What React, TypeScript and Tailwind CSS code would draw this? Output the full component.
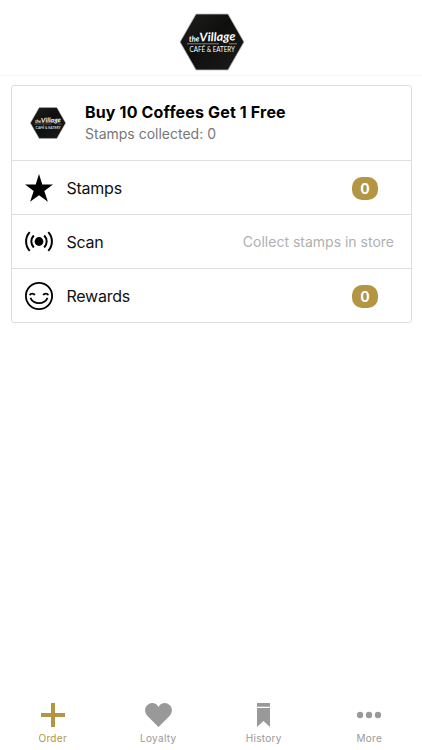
import type { ReactNode } from "react";

function Logo({ className }: { className: string }) {
  return (
    <svg className={className} viewBox="0 0 66 58">
      <defs>
        <linearGradient id="hex" x1="0" y1="0" x2="1" y2="1">
          <stop offset="0" stopColor="#20211f" />
          <stop offset="0.45" stopColor="#0f100e" />
          <stop offset="1" stopColor="#1b1c1a" />
        </linearGradient>
      </defs>
      <path
        d="M17 1h32l16 28-16 28H17L1 29z"
        fill="url(#hex)"
        stroke="#bdbdbb"
        strokeWidth="0.8"
      />
      <g fill="#fff" fontFamily="Lato, sans-serif">
        <g fontStyle="italic" transform="rotate(-2 33 27)">
          <text x="10" y="28" fontSize="8" fontWeight="700" textLength="10.5" lengthAdjust="spacingAndGlyphs">
            the
          </text>
          <text x="20.5" y="28.2" fontSize="12" fontWeight="700" textLength="36" lengthAdjust="spacingAndGlyphs">
            Village
          </text>
        </g>
        <path d="M8 30.8h32M50 30.8h8" stroke="#ccc" strokeWidth="0.6" />
        <text x="10.5" y="39.2" fontSize="7.8" textLength="45.5" lengthAdjust="spacingAndGlyphs">
          CAFÉ &amp; EATERY
        </text>
      </g>
    </svg>
  );
}

const StarIcon = () => (
  <svg className="h-7 w-7" viewBox="0 0 28 28">
    <path d="M14 0l3.3 10.5H28l-8.700 6.400 3.600 10.800L14 21.200l-8.900 6.500 3.600-10.800L0 10.500h10.700z" />
  </svg>
);

const ScanIcon = () => (
  <svg className="h-7 w-7" viewBox="0 0 28 28" fill="none" stroke="#000" strokeWidth="2">
    <circle cx="14" cy="13.500" r="4.400" fill="#000" stroke="none" />
    <path d="M8.800 7.500c-3.300 3.400-3.300 8.600 0 12M19.200 7.500c3.300 3.400 3.300 8.600 0 12" />
    <path d="M4.700 4.200c-4.800 5.300-4.800 13.300 0 18.600M23.300 4.200c4.800 5.300 4.800 13.300 0 18.600" />
  </svg>
);

const SmileIcon = () => (
  <svg className="h-7 w-7" viewBox="0 0 28 28" fill="none" stroke="#000" strokeWidth="1.800">
    <circle cx="14" cy="14" r="13.100" />
    <path d="M5.400 15.800c1.600 3.400 4.900 5.300 8.600 5.300s7-1.900 8.600-5.300" />
    <path d="M4.800 13.200c.6-2.200 4.100-2.200 5 0M18.200 13.200c.9-2.200 4.400-2.200 5 0" />
  </svg>
);

function Badge({ count }: { count: number }) {
  return (
    <span className="mt-px mr-4 flex h-[23px] w-[26px] items-center justify-center rounded-[10px] bg-[#b39543] pt-px text-[14px] font-bold text-white">
      {count}
    </span>
  );
}

function Row({ icon, label, children }: { icon: ReactNode; label: string; children: ReactNode }) {
  return (
    <div className="flex h-[54px] items-center border-t border-[#dedede] pr-[17px] pl-[13px]">
      {icon}
      <span className="ml-[13.500px] flex-1 text-[16px] tracking-[-0.250px] text-[#111]">{label}</span>
      {children}
    </div>
  );
}

function Tab({ icon, label, active }: { icon: ReactNode; label: string; active?: boolean }) {
  return (
    <div className={active ? "flex flex-1 flex-col items-center text-[#b39543]" : "flex flex-1 flex-col items-center text-[#999]"}>
      <div className="flex h-7 items-center">{icon}</div>
      <span className="mt-[2px] text-[10px] leading-[14px] tracking-[0.300px]">{label}</span>
    </div>
  );
}

function App() {
  return (
    <div className="flex h-screen w-full flex-col bg-white font-[Inter,sans-serif]">
      <header className="flex h-[76px] justify-center border-b border-[#f4f4f4] pt-[13px] pl-px">
        <Logo className="h-[58px] w-[66px]" />
      </header>

      <main className="flex-1 pt-[9px] pr-[10px] pl-[11px]">
        <div className="rounded-[3px] border border-[#dedede]">
          <div className="flex h-[74px] items-center pl-[17px]">
            <Logo className="mb-px h-[32px] w-[38px]" />
            <div className="ml-[18px]">
              <p className="text-[16px] leading-[22px] font-bold tracking-[0.160px] text-black">Buy 10 Coffees Get 1 Free</p>
              <p className="text-[14px] leading-[22px] text-[#777]">Stamps collected: 0</p>
            </div>
          </div>
          <Row icon={<StarIcon />} label="Stamps">
            <Badge count={0} />
          </Row>
          <Row icon={<ScanIcon />} label="Scan">
            <span className="text-[14px] text-[#b0b0b0]">Collect stamps in store</span>
          </Row>
          <Row icon={<SmileIcon />} label="Rewards">
            <Badge count={0} />
          </Row>
        </div>
      </main>

      <nav className="flex h-[49px]">
        <Tab
          active
          label="Order"
          icon={
            <svg className="h-6 w-6" viewBox="0 0 24 24" fill="currentColor">
              <path d="M10 0h4v10h10v4H14v10h-4V14H0v-4h10z" />
            </svg>
          }
        />
        <Tab
          label="Loyalty"
          icon={
            <svg className="h-6 w-[27px]" viewBox="0 0 27 24" fill="currentColor">
              <path d="M13.500 24L2.500 13C-3.500 6 3 0 7 0c3 0 5.200 1.500 6.500 4C14.800 1.500 17 0 20 0c4 0 10.500 6 4.500 13z" />
            </svg>
          }
        />
        <Tab
          label="History"
          icon={
            <svg className="h-6 w-[13px]" viewBox="0 0 13 24" fill="currentColor">
              <path d="M0 0h13v3.800H0zM0 5h13v19l-6.500-6L0 24z" />
            </svg>
          }
        />
        <Tab
          label="More"
          icon={
            <svg className="h-6 w-6" viewBox="0 0 24 24" fill="currentColor">
              <circle cx="3" cy="12" r="3.200" />
              <circle cx="12" cy="12" r="3.200" />
              <circle cx="21" cy="12" r="3.200" />
            </svg>
          }
        />
      </nav>
    </div>
  );
}

export default App;
